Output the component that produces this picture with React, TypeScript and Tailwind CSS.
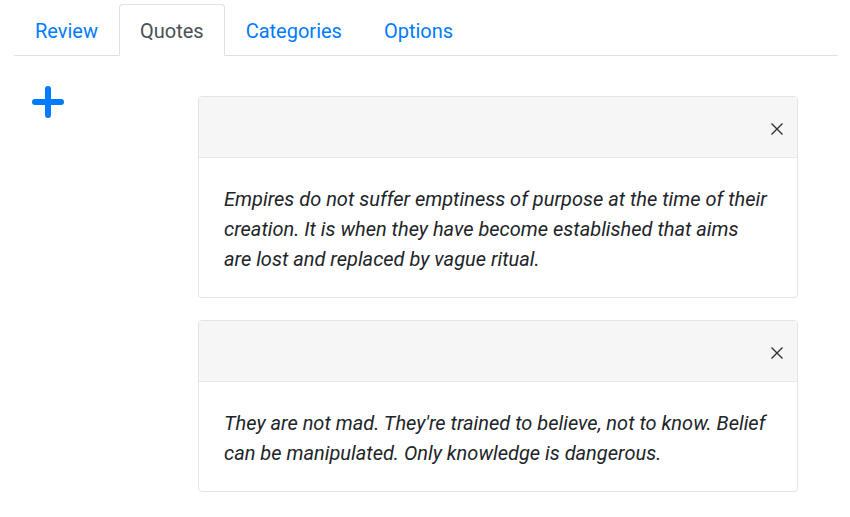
import React from "react";

const quotes = [
  "Empires do not suffer emptiness of purpose at the time of their creation. It is when they have become established that aims are lost and replaced by vague ritual.",
  "They are not mad. They're trained to believe, not to know. Belief can be manipulated. Only knowledge is dangerous.",
];

export default function App() {
  const tabs = ["Review", "Quotes", "Categories", "Options"];
  return (
    <div className="w-[850px] h-[517px] bg-white" style={{ fontFamily: "Roboto, 'Liberation Sans', sans-serif" }}>
      <div className="pt-[4px] px-[14px] pr-[12px]">
        <div className="flex border-b border-[#dee2e6]">
          {tabs.map((t) => (
            <div
              key={t}
              className={
                t === "Quotes"
                  ? "mb-[-1px] px-[20px] pt-[2px] h-[52px] flex items-center text-[20px] text-[#495057] bg-white border border-[#dee2e6] border-b-white rounded-t-[4px]"
                  : "mb-[-1px] px-[20px] pt-[2px] h-[52px] flex items-center text-[20px] text-[#007bff] border border-transparent"
              }
            >
              {t}
            </div>
          ))}
        </div>
      </div>
      <div className="flex mt-[40px]">
        <div className="w-[198px] pl-[32px]">
          <svg width="32" height="32" viewBox="0 0 32 32" className="mt-[-10px]">
            <path d="M16 3 V29 M3 16 H29" stroke="#007bff" strokeWidth="6" strokeLinecap="round" />
          </svg>
        </div>
        <div className="w-[600px] flex flex-col gap-[22px]">
          {quotes.map((q, i) => (
            <div key={i} className="border border-[#e4e4e4] rounded-[4px] overflow-hidden">
              <div className="h-[61px] bg-[#f6f6f6] border-b border-[#e8e8e8] flex items-center justify-end pr-[14px] pt-[3px]">
                <svg width="12" height="12" viewBox="0 0 12 12">
                  <path d="M0.5 0.5 L11.5 11.5 M11.5 0.5 L0.5 11.5" stroke="#333" strokeWidth="1.4" />
                </svg>
              </div>
              <div className="pl-[25px] pr-[28px] pt-[26px] pb-[23px] text-[20px] leading-[30px] italic text-[#212529]">
                {q}
              </div>
            </div>
          ))}
        </div>
      </div>
    </div>
  );
}
